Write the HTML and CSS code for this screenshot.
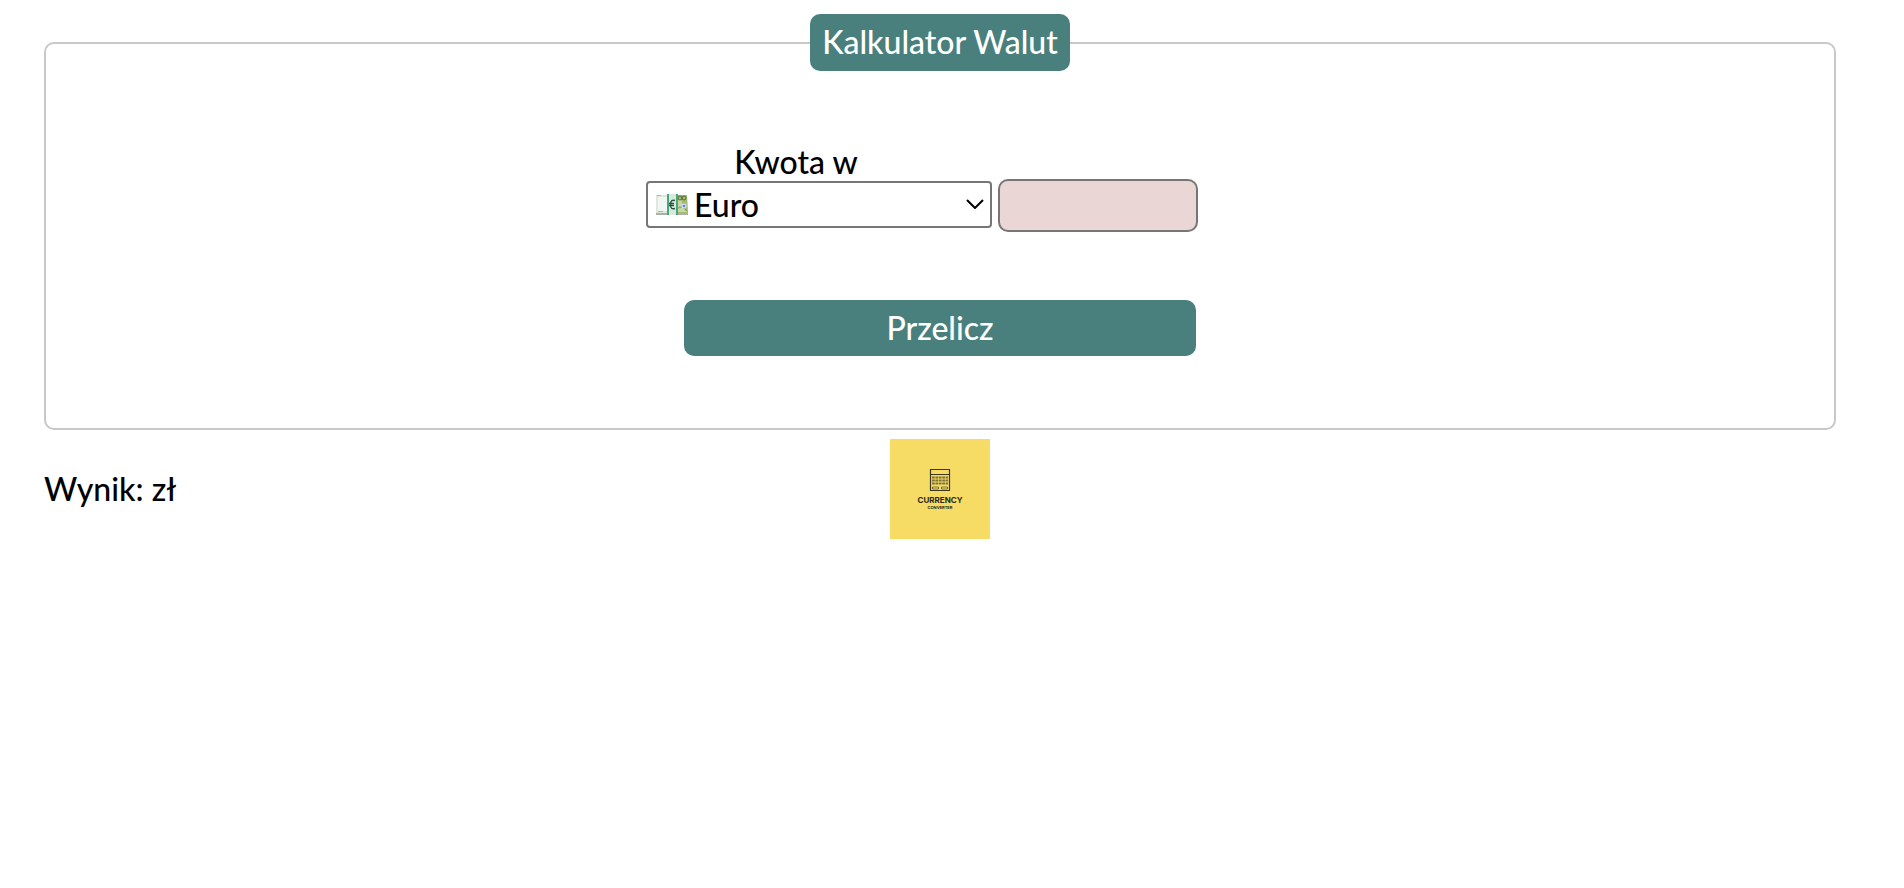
FILE: index.html
```html
<!DOCTYPE html>
<html lang="pl">
<head>
<meta charset="utf-8">
<title>Kalkulator Walut</title>
<link rel="stylesheet" href="styles.css">
</head>
<body>
<form class="form">
  <fieldset class="form__fieldset">
    <legend class="form__legend">Kalkulator Walut</legend>
    <div class="form__row">
      <div class="form__currency">
        <label class="form__label" for="currency">Kwota w</label>
        <div class="form__selectBox">
          <select class="form__select" id="currency">
            <option>Euro</option>
          </select>
          <svg class="form__note" viewBox="0 0 32 22" aria-hidden="true">
            <path d="M0 19h32v2H0z" fill="#a9b3a0"/>
            <path d="M0 1h31l1 18H0z" fill="#dfe8da"/>
            <path d="M2 3h9v14H2z" fill="#f2f5f6"/>
            <path d="M1 1h4v1H1zM2 17h5v1H2z" fill="#a9c47e"/>
            <path d="M20 1h11l1 18H20z" fill="#a5bc70"/>
            <path d="M21 6q4-3 5 3t5 9H21z" fill="#c9d6a4"/>
            <path d="M21 15q5-5 10 2" fill="none" stroke="#789655"/>
            <circle cx="24" cy="4" r="2" fill="none" stroke="#52693b"/>
            <circle cx="28" cy="4" r="2" fill="none" stroke="#52693b"/>
            <circle cx="28" cy="12" r="2.5" fill="#d6e4f5"/>
            <circle cx="28" cy="12" r="1.3" fill="#5c7fe0"/>
            <path d="M11 0h10v21H11z" fill="#d9eadd"/>
            <path d="M11 0h2v21h-2zM20 0h2v21h-2z" fill="#43a87e"/>
            <path d="M19 6.500Q14.500 5 14.500 10.500T19 14.500M13 9.500h5M13 11.500h5" fill="none" stroke="#33503f" stroke-width="1.400"/>
          </svg>
          <svg class="form__arrow" viewBox="0 0 18 10" aria-hidden="true">
            <path d="M1 1l8 8 8-8" fill="none" stroke="#000" stroke-width="2"/>
          </svg>
        </div>
      </div>
      <input class="form__input" type="number" aria-label="Kwota">
    </div>
    <button class="form__button" type="button">Przelicz</button>
  </fieldset>
  <div class="result">
    <p class="result__text">Wynik: zł</p>
    <svg class="result__logo" viewBox="0 0 100 100" role="img" aria-label="Currency Converter">
      <path d="M0 0h100v100H0z" fill="#f6dc64"/>
      <g fill="none" stroke="#3c371f">
        <path d="M40.500 30.500h19v21h-19zM40.500 35.500h19" stroke-width="1.200"/>
        <path d="M42 38.500h16M42 41.500h16M42 44.500h16" stroke-width="1.800" stroke-dasharray="2.800 .6" opacity=".65"/>
        <path d="M42.500 48h6v2h-6zM51.500 48h6v2h-6z" stroke-width=".8" opacity=".8"/>
      </g>
      <text class="result__name" x="50" y="64">CURRENCY</text>
      <text class="result__sub" x="50" y="70">CONVERTER</text>
    </svg>
  </div>
</form>
</body>
</html>
```
FILE: styles.css
```css
* {
  box-sizing: border-box;
}

body {
  margin: 0;
  padding: 14px 68px 14px 44px;
  background: #fff;
  color: #000;
  font-family: "Lato", sans-serif;
  font-size: 32px;
  font-weight: 500;
  line-height: 38px;
}

.form__fieldset {
  margin: 0;
  padding: 72px 0;
  border: 2px solid #c8c8c8;
  border-radius: 10px;
}

.form__legend {
  margin: 0 auto;
  padding: 9px 12px 10px;
  border-radius: 10px;
  background: #49807e;
  color: #fff;
}

.form__row {
  display: flex;
  justify-content: center;
  align-items: flex-end;
  gap: 6px;
  margin-right: 36px;
}

.form__currency {
  width: 346px;
  margin-bottom: 4px;
}

.form__label {
  display: block;
  width: 300px;
  text-align: center;
}

.form__selectBox {
  position: relative;
}

.form__select {
  display: block;
  width: 100%;
  height: 47px;
  padding: 0 40px 0 46px;
  border: 2px solid #767676;
  border-radius: 4px;
  appearance: none;
  background: #fff;
  color: #000;
  font: inherit;
}

.form__note {
  position: absolute;
  top: 13px;
  left: 10px;
  width: 32px;
  height: 22px;
  pointer-events: none;
}

.form__arrow {
  position: absolute;
  top: 18px;
  right: 8px;
  width: 18px;
  height: 10px;
  pointer-events: none;
}

.form__input {
  width: 200px;
  height: 53px;
  padding: 0 10px;
  border: 2px solid #767676;
  border-radius: 10px;
  background: #ebd6d6;
  font: inherit;
}

.form__button {
  display: block;
  width: 512px;
  margin: 68px auto 0;
  padding: 9px;
  border: 0;
  border-radius: 10px;
  background: #49807e;
  color: #fff;
  font: inherit;
}

.result {
  display: grid;
  grid-template-columns: 1fr auto 1fr;
  align-items: center;
  margin-top: 9px;
}

.result__text {
  margin: 0;
}

.result__logo {
  width: 100px;
  height: 100px;
}

.result__name,
.result__sub {
  fill: #2b2717;
  font-family: "Inter", sans-serif;
  font-weight: 700;
  text-anchor: middle;
}

.result__name {
  font-size: 8px;
}

.result__sub {
  font-size: 4px;
}
```
